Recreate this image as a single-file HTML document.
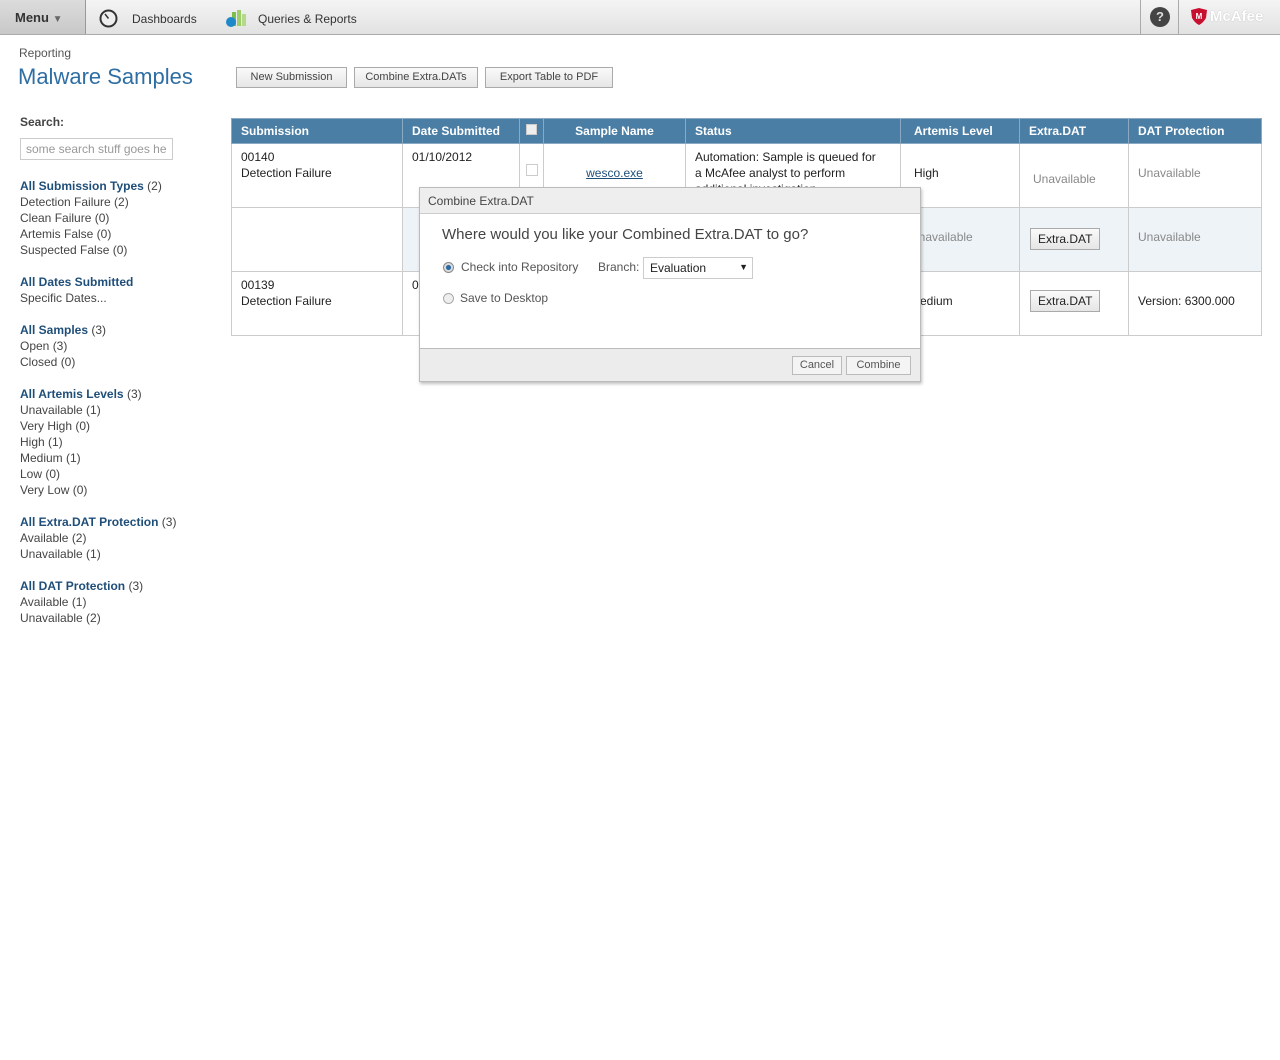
<!DOCTYPE html>
<html><head><meta charset="utf-8"><style>
*{box-sizing:border-box;margin:0;padding:0}
body{width:1280px;height:1060px;background:#fff;font-family:"Liberation Sans",sans-serif;font-size:12px;color:#333;position:relative;overflow:hidden}
.abs{position:absolute}
.top{left:0;top:0;width:1280px;height:35px;background:linear-gradient(#f4f4f4,#e2e2e2);border-bottom:1px solid #aaa}
.menu{left:0;top:0;width:86px;height:34px;background:linear-gradient(#dcdcdc,#c8c8c8);border-right:1px solid #999;font-weight:bold;font-size:13px;color:#333;padding:10px 0 0 15px}
.btn{position:absolute;top:67px;height:21px;border:1px solid #aaa;background:linear-gradient(#fafafa,#e6e6e6);font-size:11px;color:#444;text-align:center;line-height:19px}
.side{left:20px;font-size:12px;line-height:16px;color:#444}
.side b{color:#1f4e79}
table{position:absolute;left:231px;top:118px;border-collapse:collapse;width:1031px;table-layout:fixed}
th{background:#4a7ea5;color:#fff;font-size:12px;text-align:left;height:25px;border:1px solid #8aa9c2;padding:0 9px}
td{border:1px solid #ccc;vertical-align:top;padding:0;font-size:12px;line-height:16px;height:64px;color:#222}
td>div{height:63px;overflow:hidden;padding:5px 9px}
.g{color:#888}
.eb{display:inline-block;border:1px solid #aaa;background:linear-gradient(#fafafa,#e6e6e6);padding:2px 7px;font-size:12px}
</style></head><body>
<div class="abs top"></div>
<div class="abs menu">Menu <span style="font-size:10px;color:#666">▼</span></div>
<svg class="abs" style="left:99px;top:9px" width="19" height="19"><circle cx="9.5" cy="9.5" r="8" fill="#eee" stroke="#333" stroke-width="2"/><line x1="9.5" y1="9.5" x2="6" y2="5" stroke="#333" stroke-width="1.5"/></svg>
<div class="abs" style="left:132px;top:12px;font-size:12px;color:#333">Dashboards</div>
<svg class="abs" style="left:225px;top:8px" width="22" height="20"><rect x="7" y="4" width="4" height="14" fill="#7bbf4a"/><rect x="12" y="2" width="4" height="16" fill="#9ccf6a"/><rect x="17" y="6" width="4" height="12" fill="#b5d98a"/><circle cx="6" cy="14" r="5" fill="#1e88c8"/></svg>
<div class="abs" style="left:258px;top:12px;font-size:12px;color:#333">Queries &amp; Reports</div>
<div class="abs" style="left:1140px;top:0;width:1px;height:34px;background:#aaa"></div>
<div class="abs" style="left:1178px;top:0;width:1px;height:34px;background:#aaa"></div>
<div class="abs" style="left:1150px;top:7px;width:20px;height:20px;border-radius:50%;background:#444;color:#ddd;font-weight:bold;font-size:13px;text-align:center;line-height:20px">?</div>
<svg class="abs" style="left:1190px;top:8px" width="18" height="18"><path d="M1 2 L9 0 L17 2 L16 10 Q13 15 9 17 Q5 15 2 10 Z" fill="#c8102e"/><text x="9" y="11" font-size="8" font-weight="bold" fill="#fff" text-anchor="middle" font-family="Liberation Sans">M</text></svg>
<div class="abs" style="left:1210px;top:8px;font-weight:bold;font-size:15px;color:#fff;text-shadow:0 0 1px #aaa">McAfee</div>

<div class="abs" style="left:19px;top:46px;font-size:12px;color:#555">Reporting</div>
<div class="abs" style="left:18px;top:64px;font-size:22px;color:#2f6ea3">Malware Samples</div>
<div class="btn" style="left:236px;width:111px">New Submission</div>
<div class="btn" style="left:354px;width:124px">Combine Extra.DATs</div>
<div class="btn" style="left:485px;width:128px">Export Table to PDF</div>

<div class="abs" style="left:20px;top:115px;font-weight:bold;font-size:12px;color:#444">Search:</div>
<div class="abs" style="left:20px;top:138px;width:153px;height:22px;border:1px solid #ccc;color:#999;font-size:12px;padding:3px 5px;white-space:nowrap;overflow:hidden">some search stuff goes he</div>
<div class="abs side" style="top:178px"><b>All Submission Types</b> (2)<br>Detection Failure (2)<br>Clean Failure (0)<br>Artemis False (0)<br>Suspected False (0)</div>
<div class="abs side" style="top:274px"><b>All Dates Submitted</b><br>Specific Dates...</div>
<div class="abs side" style="top:322px"><b>All Samples</b> (3)<br>Open (3)<br>Closed (0)</div>
<div class="abs side" style="top:386px"><b>All Artemis Levels</b> (3)<br>Unavailable (1)<br>Very High (0)<br>High (1)<br>Medium (1)<br>Low (0)<br>Very Low (0)</div>
<div class="abs side" style="top:514px"><b>All Extra.DAT Protection</b> (3)<br>Available (2)<br>Unavailable (1)</div>
<div class="abs side" style="top:578px"><b>All DAT Protection</b> (3)<br>Available (1)<br>Unavailable (2)</div>

<table>
<colgroup><col style="width:171px"><col style="width:117px"><col style="width:24px"><col style="width:142px"><col style="width:215px"><col style="width:119px"><col style="width:109px"><col></colgroup>
<tr><th>Submission</th><th>Date Submitted</th><th style="padding:0 6px"><span style="display:inline-block;width:11px;height:11px;background:#eee;border:1px solid #ccc"></span></th><th style="text-align:center">Sample Name</th><th>Status</th><th style="padding-left:13px">Artemis Level</th><th>Extra.DAT</th><th>DAT Protection</th></tr>
<tr><td><div>00140<br>Detection Failure</div></td><td><div>01/10/2012</div></td><td><div style="padding:20px 6px"><span style="display:inline-block;width:12px;height:12px;border:1px solid #ccc"></span></div></td><td><div style="text-align:center;padding-top:21px"><u style="color:#1f4e79">wesco.exe</u></div></td><td><div style="padding-right:20px">Automation: Sample is queued for a McAfee analyst to perform additional investigation</div></td><td><div style="padding:21px 13px">High</div></td><td><div class="g" style="padding:27px 13px">Unavailable</div></td><td><div class="g" style="padding-top:21px">Unavailable</div></td></tr>
<tr style="background:#eef3f7"><td style="background:#fff;border-top:none"><div></div></td><td><div></div></td><td><div></div></td><td><div></div></td><td><div></div></td><td><div class="g" style="padding-top:21px">Unavailable</div></td><td><div style="padding:20px 10px"><span class="eb">Extra.DAT</span></div></td><td><div class="g" style="padding-top:21px">Unavailable</div></td></tr>
<tr><td><div>00139<br>Detection Failure</div></td><td><div>0</div></td><td><div></div></td><td><div></div></td><td><div></div></td><td><div style="padding-top:21px">Medium</div></td><td><div style="padding:18px 10px"><span class="eb">Extra.DAT</span></div></td><td><div style="padding-top:21px">Version: 6300.000</div></td></tr>
</table>

<div class="abs" style="left:419px;top:187px;width:502px;height:195px;background:#fff;border:1px solid #bbb;box-shadow:1px 2px 3px rgba(0,0,0,.25)">
<div style="height:26px;background:#eee;border-bottom:1px solid #ccc;padding:6px 8px;font-size:12px;color:#444">Combine Extra.DAT</div>
<div class="abs" style="left:22px;top:38px;font-size:15px;color:#444">Where would you like your Combined Extra.DAT to go?</div>
<div class="abs" style="left:23px;top:74px;width:11px;height:11px;border-radius:50%;border:1px solid #888;background:radial-gradient(#2a6aa0 35%,#ddd 45%)"></div>
<div class="abs" style="left:41px;top:72px;font-size:12px;color:#555">Check into Repository</div>
<div class="abs" style="left:178px;top:72px;font-size:12px;color:#555">Branch:</div>
<div class="abs" style="left:223px;top:69px;width:110px;height:22px;border:1px solid #ccc;padding:3px 6px;font-size:12px;color:#222">Evaluation<span style="position:absolute;right:4px;top:4px;font-size:9px">▼</span></div>
<div class="abs" style="left:23px;top:105px;width:11px;height:11px;border-radius:50%;border:1px solid #aaa;background:#eee"></div>
<div class="abs" style="left:40px;top:103px;font-size:12px;color:#555">Save to Desktop</div>
<div class="abs" style="left:0;top:160px;width:500px;height:33px;background:#ececec;border-top:1px solid #bbb"></div>
<div class="abs" style="left:372px;top:168px;width:50px;height:19px;border:1px solid #bbb;background:#f4f4f4;font-size:11px;color:#555;text-align:center;line-height:17px">Cancel</div>
<div class="abs" style="left:426px;top:168px;width:65px;height:19px;border:1px solid #bbb;background:#f4f4f4;font-size:11px;color:#555;text-align:center;line-height:17px">Combine</div>
</div>
</body></html>
